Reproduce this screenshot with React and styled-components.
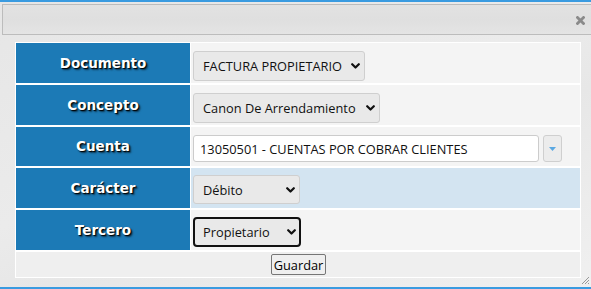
import React from "react";
import styled, { createGlobalStyle } from "styled-components";

const UI_FONT = `"Open Sans", "Noto Sans", sans-serif`;

const GlobalStyle = createGlobalStyle`
  html, body { margin: 0; padding: 0; }
  body {
    width: 591px;
    height: 289px;
    overflow: hidden;
    background: #e8e8e8;
    font-family: ${UI_FONT};
  }
`;

const Dialog = styled.div`
  position: relative;
  box-sizing: border-box;
  width: 591px;
  height: 289px;
  border-top: 2px solid #3a9be0;
  border-bottom: 2px solid #3a9be0;
  padding: 2px 0 0 2px;
  background: linear-gradient(160deg, #e6e6e6 0%, #ebebeb 45%, #e7e7e7 60%, #f0f0f0 100%);
  display: flex;
  flex-direction: column;
  overflow: hidden;
`;

const TitleBar = styled.div`
  box-sizing: border-box;
  height: 31px;
  border: 1px solid #bcbcbc;
  border-right: none;
  background: linear-gradient(to bottom, #e2e2e2 0%, #dfdfdf 50%, #e4e4e4 100%);
  display: flex;
  align-items: center;
  justify-content: flex-end;
  padding: 2px 6px 0 0;
`;

const CloseIcon = styled.svg`
  width: 9px;
  height: 9px;
  display: block;
`;

const Body = styled.div`
  padding: 7px 0 0 13px;
`;

const FormGrid = styled.div`
  box-sizing: border-box;
  width: 566px;
  display: grid;
  grid-template-columns: 174px 389px;
  grid-template-rows: 40px 40px 39px 40px 40px 25px;
  column-gap: 1px;
  row-gap: 2px;
  padding: 1px;
  background: #ffffff;
`;

const LabelCell = styled.div`
  background: #1c7ab6;
  color: #ffffff;
  font-family: "DejaVu Sans", Verdana, sans-serif;
  font-weight: bold;
  font-size: 13.5px;
  text-shadow: 1px 1px 1px #000, 2px 2px 2px rgba(0, 0, 0, 0.55);
  display: flex;
  align-items: center;
  justify-content: center;
  padding-bottom: 1px;
`;

const ValueCell = styled.div`
  box-sizing: border-box;
  background: ${(p) => (p.$highlight ? "#d3e4f1" : "#f4f4f4")};
  display: flex;
  align-items: flex-start;
  gap: 4px;
  padding: ${(p) => p.$pt ?? 8}px 0 0 2px;
`;

const SelectWrap = styled.span`
  position: relative;
  display: inline-block;
`;

const Select = styled.select`
  appearance: none;
  -webkit-appearance: none;
  box-sizing: border-box;
  width: ${(p) => p.$w}px;
  height: ${(p) => p.$h || 30}px;
  margin: 0;
  padding: 0 0 0 ${(p) => (p.$focused ? 8 : 9)}px;
  font-family: ${UI_FONT};
  font-size: 12.8px;
  color: #111;
  background: #e9e9e9;
  border: ${(p) => (p.$focused ? "2px solid #111" : "1px solid #cfcfcf")};
  border-radius: ${(p) => (p.$focused ? 4 : 3)}px;
  outline: none;
`;

const Chevron = styled.svg`
  position: absolute;
  right: 5px;
  top: 50%;
  margin-top: -3px;
  width: 9px;
  height: 6px;
  pointer-events: none;
`;

const TextInput = styled.input`
  box-sizing: border-box;
  width: 346px;
  height: 27px;
  margin: 0;
  padding: 0 0 0 6px;
  font-family: ${UI_FONT};
  font-size: 12.8px;
  color: #111;
  background: #ffffff;
  border: 1px solid #cccccc;
  border-radius: 3px;
  outline: none;
`;

const DropButton = styled.button`
  box-sizing: border-box;
  width: 19px;
  height: 27px;
  margin: 0;
  padding: 0;
  border: 1px solid #cfcfcf;
  border-radius: 3px;
  background: #ececec;
  display: flex;
  align-items: center;
  justify-content: center;
`;

const ActionRow = styled.div`
  grid-column: 1 / -1;
  background: #efefef;
  display: flex;
  align-items: center;
  justify-content: center;
  padding-left: 1px;
`;

const SaveButton = styled.button`
  box-sizing: border-box;
  height: 21px;
  margin: 0;
  padding: 0 2px;
  font-family: ${UI_FONT};
  font-size: 12.8px;
  color: #000;
  background: #efefef;
  border: 1px solid #767676;
  border-radius: 2px;
`;

const Grip = styled.svg`
  position: absolute;
  right: 1px;
  bottom: 2px;
  width: 9px;
  height: 9px;
`;

function ChevronIcon() {
  return (
    <Chevron viewBox="0 0 9 6">
      <path d="M1.2 1.2 L4.5 4.5 L7.8 1.2" fill="none" stroke="#111" strokeWidth="2.2" strokeLinecap="round" strokeLinejoin="round" />
    </Chevron>
  );
}

function FakeSelect({ width, height, focused, value }) {
  return (
    <SelectWrap>
      <Select $w={width} $h={height} $focused={focused} defaultValue={value}>
        <option value={value}>{value}</option>
      </Select>
      <ChevronIcon />
    </SelectWrap>
  );
}

export default function App() {
  return (
    <>
      <GlobalStyle />
      <Dialog>
        <TitleBar>
          <CloseIcon viewBox="0 0 9 9">
            <path d="M1.5 1.5 L7.5 7.5 M7.5 1.5 L1.5 7.5" stroke="#8a8a8a" strokeWidth="2.8" strokeLinecap="square" />
          </CloseIcon>
        </TitleBar>
        <Body>
          <FormGrid>
            <LabelCell>Documento</LabelCell>
            <ValueCell>
              <FakeSelect width={172} value="FACTURA PROPIETARIO" />
            </ValueCell>

            <LabelCell>Concepto</LabelCell>
            <ValueCell>
              <FakeSelect width={187} value="Canon De Arrendamiento" />
            </ValueCell>

            <LabelCell>Cuenta</LabelCell>
            <ValueCell>
              <TextInput readOnly value="13050501 - CUENTAS POR COBRAR CLIENTES" />
              <DropButton type="button">
                <svg width="7" height="4" viewBox="0 0 7 4">
                  <path d="M0 0 H7 L3.5 4 Z" fill="#5aa8e2" />
                </svg>
              </DropButton>
            </ValueCell>

            <LabelCell>Carácter</LabelCell>
            <ValueCell $highlight $pt={7}>
              <FakeSelect width={107} height={29} value="Débito" />
            </ValueCell>

            <LabelCell>Tercero</LabelCell>
            <ValueCell $pt={7}>
              <FakeSelect width={108} focused value="Propietario" />
            </ValueCell>

            <ActionRow>
              <SaveButton type="button">Guardar</SaveButton>
            </ActionRow>
          </FormGrid>
        </Body>
        <Grip viewBox="0 0 9 9">
          <path d="M8 1 L1 8 M8 4 L4 8 M8 7 L7 8" stroke="#999" strokeWidth="1" />
        </Grip>
      </Dialog>
    </>
  );
}
